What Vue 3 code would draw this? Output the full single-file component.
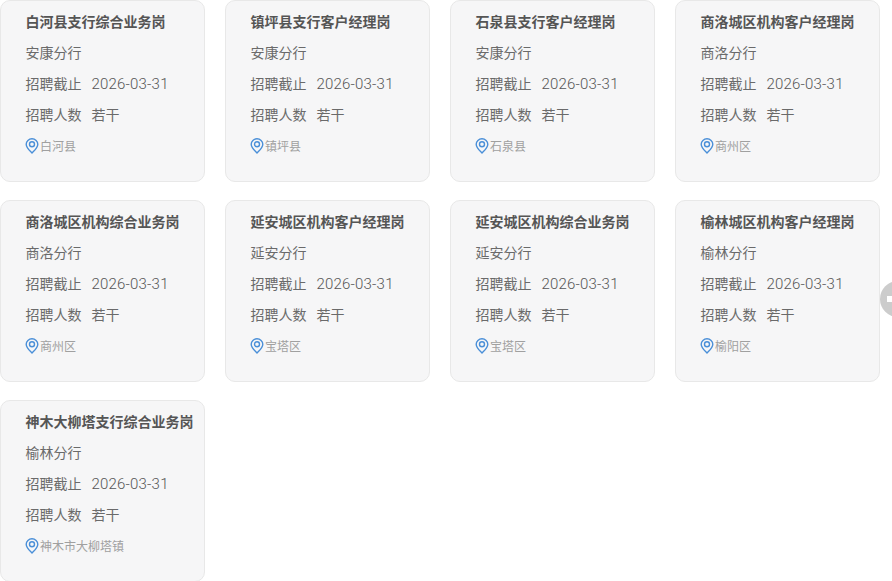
<script setup>
const jobs = [
  ['白河县支行综合业务岗', '安康分行', '白河县'],
  ['镇坪县支行客户经理岗', '安康分行', '镇坪县'],
  ['石泉县支行客户经理岗', '安康分行', '石泉县'],
  ['商洛城区机构客户经理岗', '商洛分行', '商州区'],
  ['商洛城区机构综合业务岗', '商洛分行', '商州区'],
  ['延安城区机构客户经理岗', '延安分行', '宝塔区'],
  ['延安城区机构综合业务岗', '延安分行', '宝塔区'],
  ['榆林城区机构客户经理岗', '榆林分行', '榆阳区'],
  ['神木大柳塔支行综合业务岗', '榆林分行', '神木市大柳塔镇'],
]
</script>

<template>
  <div class="page">
    <div class="grid">
      <div v-for="(j, i) in jobs" :key="i" class="card">
        <div class="title">{{ j[0] }}</div>
        <div class="row">{{ j[1] }}</div>
        <div class="row"><span class="label">招聘截止</span><span class="date">2026-03-31</span></div>
        <div class="row"><span class="label">招聘人数</span><span>若干</span></div>
        <div class="loc">
          <svg class="pin" width="14" height="16" viewBox="0 0 14 16" fill="none" stroke="#4a8fd8" stroke-width="1.4">
            <path d="M7 15C4.6 12.6 1.2 9.8 1.2 6.3a5.8 5.5 0 0 1 11.6 0C12.8 9.8 9.4 12.6 7 15Z" />
            <circle cx="7" cy="6.3" r="2.5" />
          </svg>
          <span>{{ j[2] }}</span>
        </div>
      </div>
    </div>
    <div class="float"><span class="dash"></span></div>
  </div>
</template>

<style>
html, body { margin: 0; background: #fff; overflow: hidden; }
</style>

<style scoped>
.page {
  position: relative;
  width: 892px;
  height: 581px;
  overflow: hidden;
  font-family: "Noto Sans CJK SC", "Open Sans", sans-serif;
}
.grid {
  display: grid;
  grid-template-columns: repeat(4, 205px);
  grid-auto-rows: 182px;
  column-gap: 20px;
  row-gap: 18px;
}
.card {
  box-sizing: border-box;
  padding: 6px 0 0 24.5px;
  background: #f6f6f7;
  border: 1px solid #e8e8e8;
  border-radius: 10px;
  color: #6a6a6a;
  font-size: 14px;
  white-space: nowrap;
}
.title, .row {
  height: 31px;
  line-height: 29px;
}
.title {
  font-weight: 700;
  color: #555;
}
.label {
  display: inline-block;
  width: 66px;
}
.date {
  font-family: Roboto, sans-serif;
  font-size: 15px;
  font-weight: 300;
  color: #555;
  letter-spacing: 0.2px;
}
.loc {
  display: flex;
  align-items: center;
  height: 31px;
  padding-bottom: 2px;
  box-sizing: border-box;
  font-size: 12px;
  color: #a0a0a0;
}
.pin {
  flex: none;
  margin: 0 1px 0 -0.5px;
}
.float {
  position: absolute;
  left: 880px;
  top: 281px;
  width: 36px;
  height: 36px;
  border-radius: 50%;
  background: #ccc;
}
.dash {
  position: absolute;
  left: 7px;
  top: 15px;
  width: 20px;
  height: 6px;
  background: #fff;
}
</style>
